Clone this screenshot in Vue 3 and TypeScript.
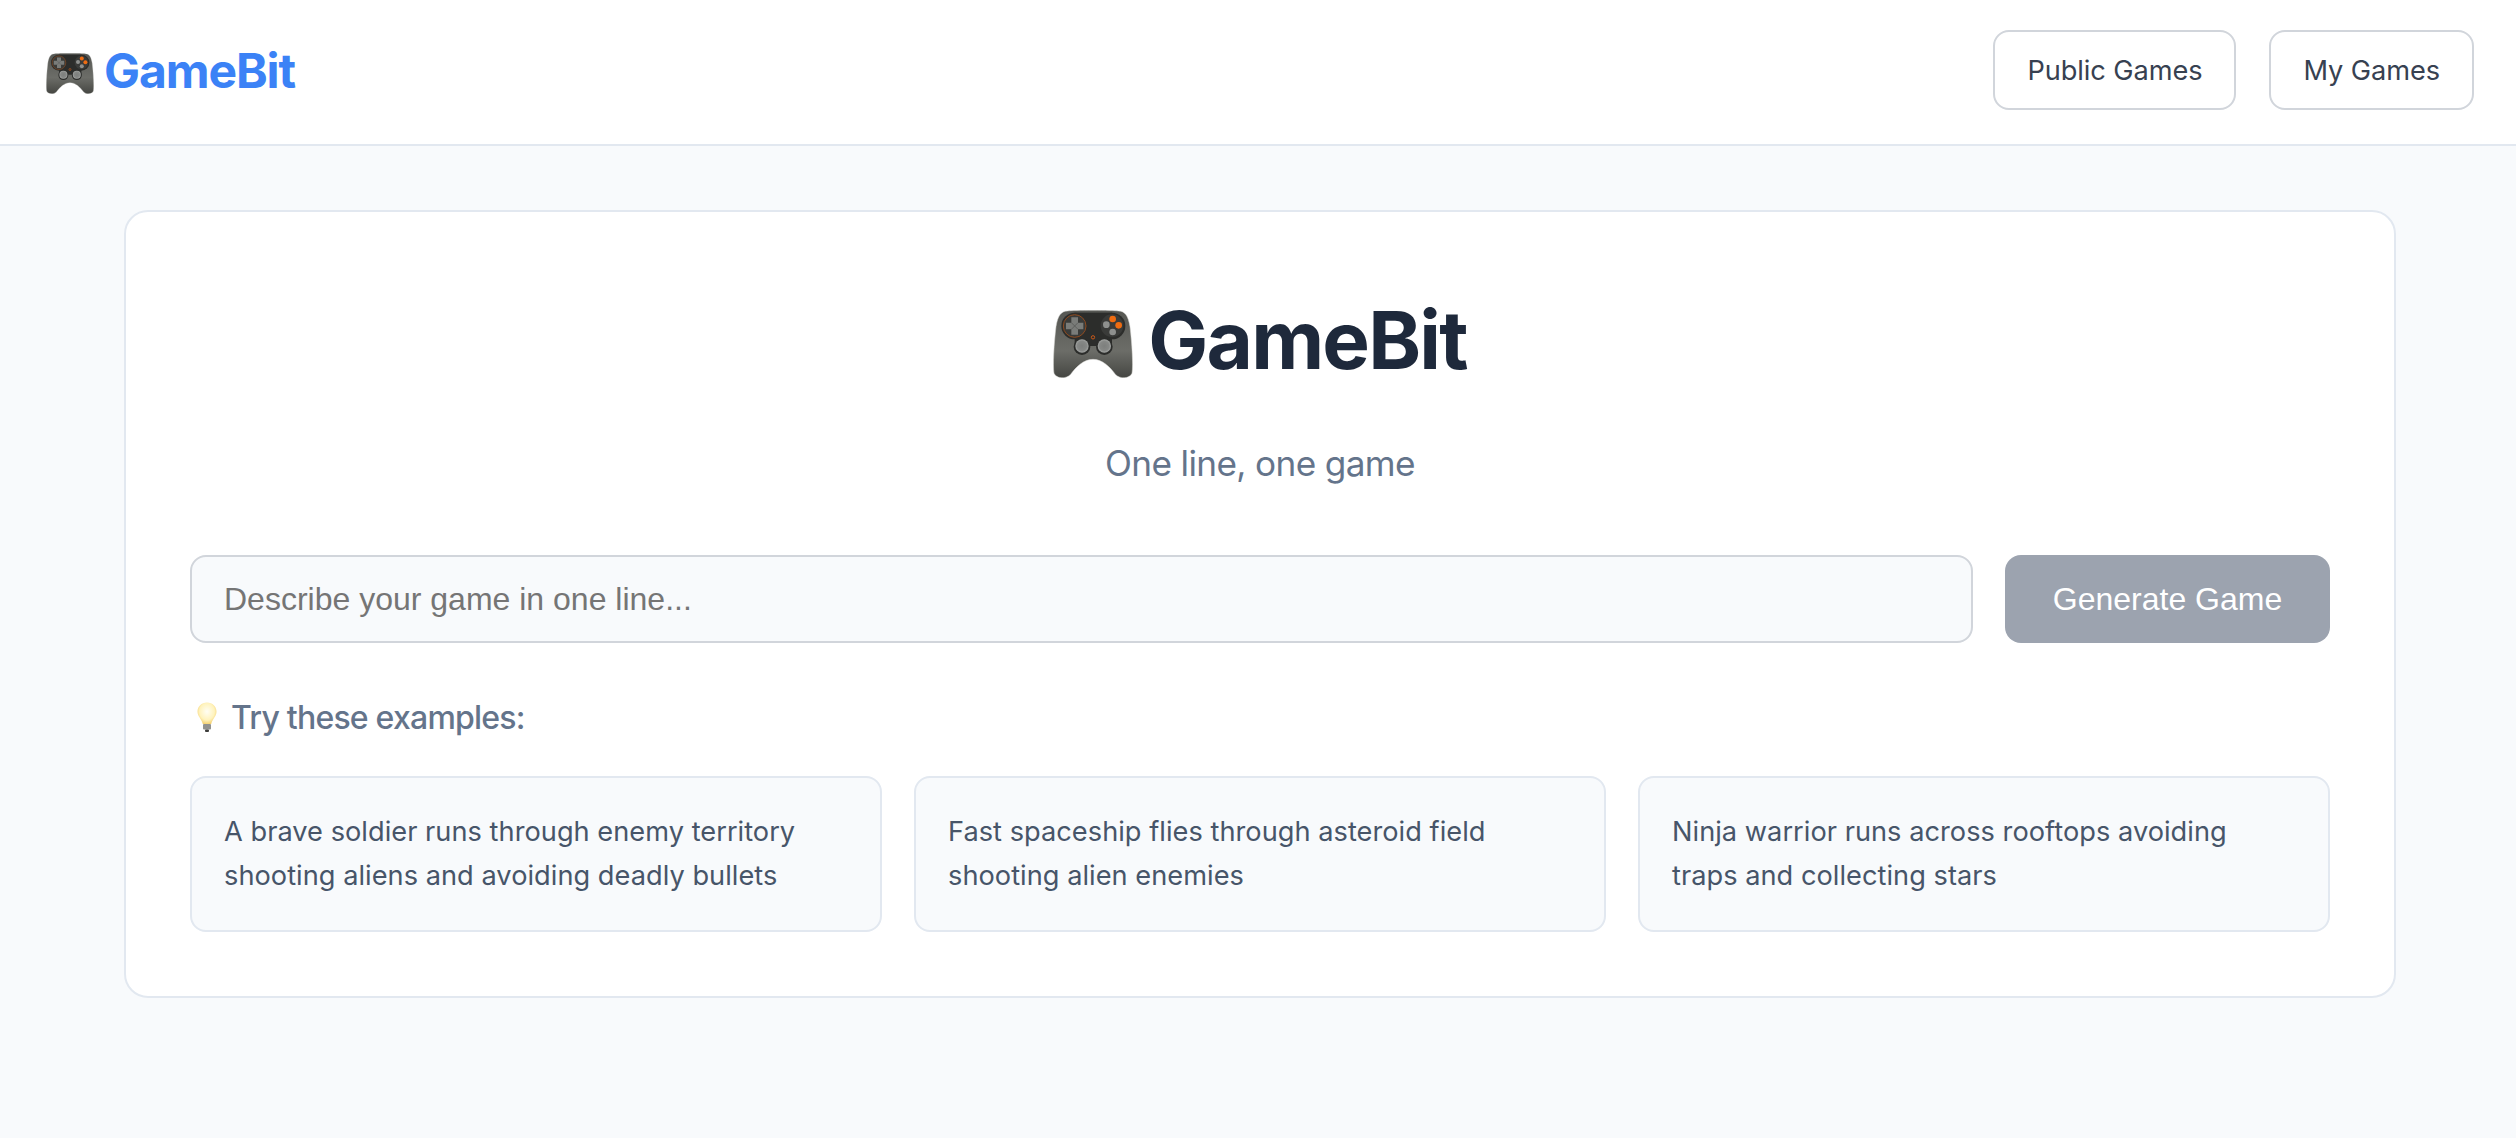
<script setup lang="ts">
const examples: string[] = [
  'A brave soldier runs through enemy territory shooting aliens and avoiding deadly bullets',
  'Fast spaceship flies through asteroid field shooting alien enemies',
  'Ninja warrior runs across rooftops avoiding traps and collecting stars',
]
</script>

<template>
  <div class="page">
    <svg class="defs" width="0" height="0" aria-hidden="true">
      <defs>
        <linearGradient id="padBody" x1="0" y1="0" x2="0" y2="1">
          <stop offset="0" stop-color="#555652" />
          <stop offset="0.6" stop-color="#6c6d68" />
          <stop offset="1" stop-color="#454642" />
        </linearGradient>
        <radialGradient id="stick" cx="0.5" cy="0.5" r="0.5">
          <stop offset="0" stop-color="#7d7f7d" />
          <stop offset="0.7" stop-color="#868886" />
          <stop offset="1" stop-color="#a4a6a4" />
        </radialGradient>
        <radialGradient id="bulbGlass" cx="0.5" cy="0.42" r="0.6">
          <stop offset="0" stop-color="#fffef4" />
          <stop offset="0.65" stop-color="#fff3bd" />
          <stop offset="1" stop-color="#f4cf6c" />
        </radialGradient>
        <symbol id="pad" viewBox="0 0 240 204">
          <path
            d="M44 3C24 3 14 18 9 50C3 100-1 165 3 190C10 206 38 208 52 194C70 170 92 148 120 148C148 148 170 170 188 194C202 208 230 206 237 190C241 165 237 100 231 50C226 18 216 3 196 3C180 0 60 0 44 3Z"
            fill="url(#padBody)"
            stroke="#d9d9d5"
            stroke-width="1.500"
          />
          <circle cx="65" cy="48" r="40" fill="#2c2d2b" />
          <circle cx="177" cy="48" r="40" fill="#2c2d2b" />
          <rect x="65" y="8" width="112" height="100" fill="#2c2d2b" />
          <circle cx="87" cy="110" r="25" fill="#2c2d2b" />
          <circle cx="154" cy="110" r="25" fill="#2c2d2b" />
          <circle cx="65" cy="48" r="34" fill="#3a3b39" stroke="#8f4b20" stroke-width="3" />
          <path d="M55 22h20v16h16v20H75v16H55V58H39V38h16Z" fill="#7a7c79" />
          <path d="M55 38 75 58M75 38 55 58" stroke="#505250" stroke-width="2" />
          <circle cx="177" cy="47" r="34" fill="#3a3b39" />
          <circle cx="179" cy="27" r="10" fill="#ee6c12" />
          <circle cx="197" cy="46" r="10" fill="#ee6c12" />
          <circle cx="160" cy="44" r="10" fill="#8e908e" />
          <circle cx="179" cy="66" r="10" fill="#8e908e" />
          <circle cx="120" cy="82" r="5" fill="none" stroke="#c8591a" stroke-width="3" />
          <circle cx="87" cy="108" r="20" fill="url(#stick)" />
          <circle cx="154" cy="108" r="20" fill="url(#stick)" />
        </symbol>
      </defs>
    </svg>

    <header class="nav">
      <div class="logo">
        <svg class="pad-small"><use href="#pad" /></svg>
        <span>GameBit</span>
      </div>
      <div class="nav-actions">
        <button class="nav-btn">Public Games</button>
        <button class="nav-btn">My Games</button>
      </div>
    </header>

    <main class="main">
      <section class="card">
        <h1 class="title">
          <svg class="pad-large"><use href="#pad" /></svg>
          <span>GameBit</span>
        </h1>
        <p class="subtitle">One line, one game</p>

        <div class="form">
          <input class="prompt" type="text" placeholder="Describe your game in one line..." />
          <button class="generate">Generate Game</button>
        </div>

        <h3 class="examples-label">
          <svg class="bulb" viewBox="0 0 20 30">
            <path
              d="M10 .5C4.500.5.500 4.600.500 9.600c0 4.600 3.900 7.400 5.300 12.400h8.400c1.400-5 5.300-7.800 5.300-12.400C19.500 4.600 15.500.5 10 .5Z"
              fill="url(#bulbGlass)"
            />
            <rect x="6" y="22" width="8" height="5.500" rx="1" fill="#92928e" />
            <rect x="8" y="27.500" width="4" height="2.500" rx="1" fill="#3d3d3b" />
          </svg>
          <span>Try these examples:</span>
        </h3>

        <div class="examples">
          <div v-for="example in examples" :key="example" class="example">{{ example }}</div>
        </div>
      </section>
    </main>
  </div>
</template>

<style>
html,
body {
  margin: 0;
  background: #f8fafc;
}
</style>

<style scoped>
.page {
  min-height: 1138px;
  background: #f8fafc;
  font-family: Inter, "Liberation Sans", sans-serif;
}
.defs {
  position: absolute;
}
.nav {
  display: flex;
  align-items: center;
  justify-content: space-between;
  height: 140px;
  padding: 0 42px 4px 46px;
  background: #fff;
  border-bottom: 2px solid #e2e8f0;
}
.logo {
  display: flex;
  align-items: center;
  gap: 10px;
  font-size: 48px;
  font-weight: 700;
  letter-spacing: -1.1px;
  color: #3b82f6;
}
.pad-small {
  width: 48px;
  height: 41px;
  margin-top: 6px;
}
.pad-large {
  width: 80px;
  height: 68px;
  margin-top: 10px;
}
.nav-actions {
  display: flex;
  gap: 33px;
}
.nav-btn {
  height: 80px;
  padding: 0 32px;
  box-sizing: border-box;
  background: #fff;
  border: 2px solid #d1d5db;
  border-radius: 16px;
  font-family: Inter, sans-serif;
  font-size: 27.2px;
  letter-spacing: -0.08px;
  color: #374151;
}
.main {
  padding: 64px 120px 64px 124px;
}
.card {
  box-sizing: border-box;
  width: 2272px;
  padding: 64px;
  background: #fff;
  border: 2px solid #e2e8f0;
  border-radius: 24px;
}
.title {
  display: flex;
  align-items: center;
  justify-content: center;
  gap: 15px;
  margin: 13px 0 0;
  height: 100px;
  font-size: 80px;
  font-weight: 700;
  letter-spacing: -1.8px;
  color: #1e293b;
}
.subtitle {
  margin: 46px 0 0;
  height: 56px;
  line-height: 56px;
  text-align: center;
  font-size: 35.2px;
  letter-spacing: -0.65px;
  color: #64748b;
}
.form {
  display: flex;
  gap: 32px;
  margin-top: 64px;
}
.prompt {
  flex: 1;
  min-width: 0;
  height: 88px;
  box-sizing: border-box;
  padding: 0 32px;
  background: #f8fafc;
  border: 2px solid #d1d5db;
  border-radius: 16px;
  font-family: "Liberation Sans", sans-serif;
  font-size: 32px;
}
.prompt::placeholder {
  color: #757575;
}
.generate {
  width: 325px;
  height: 88px;
  background: #9ca3af;
  border: 0;
  border-radius: 16px;
  font-family: "Liberation Sans", sans-serif;
  font-size: 32px;
  color: #fff;
}
.examples-label {
  display: flex;
  align-items: center;
  gap: 14px;
  margin: 50px 0 0 7px;
  height: 48px;
  font-size: 32px;
  font-weight: 550;
  letter-spacing: -0.78px;
  color: #64748b;
}
.bulb {
  width: 20px;
  height: 30px;
}
.examples {
  display: grid;
  grid-template-columns: repeat(3, 1fr);
  gap: 32px;
  margin-top: 35px;
}
.example {
  box-sizing: border-box;
  padding: 32px;
  background: #f8fafc;
  border: 2px solid #e2e8f0;
  border-radius: 16px;
  font-size: 27.2px;
  letter-spacing: 0.03px;
  line-height: 44px;
  color: #475569;
}
</style>
